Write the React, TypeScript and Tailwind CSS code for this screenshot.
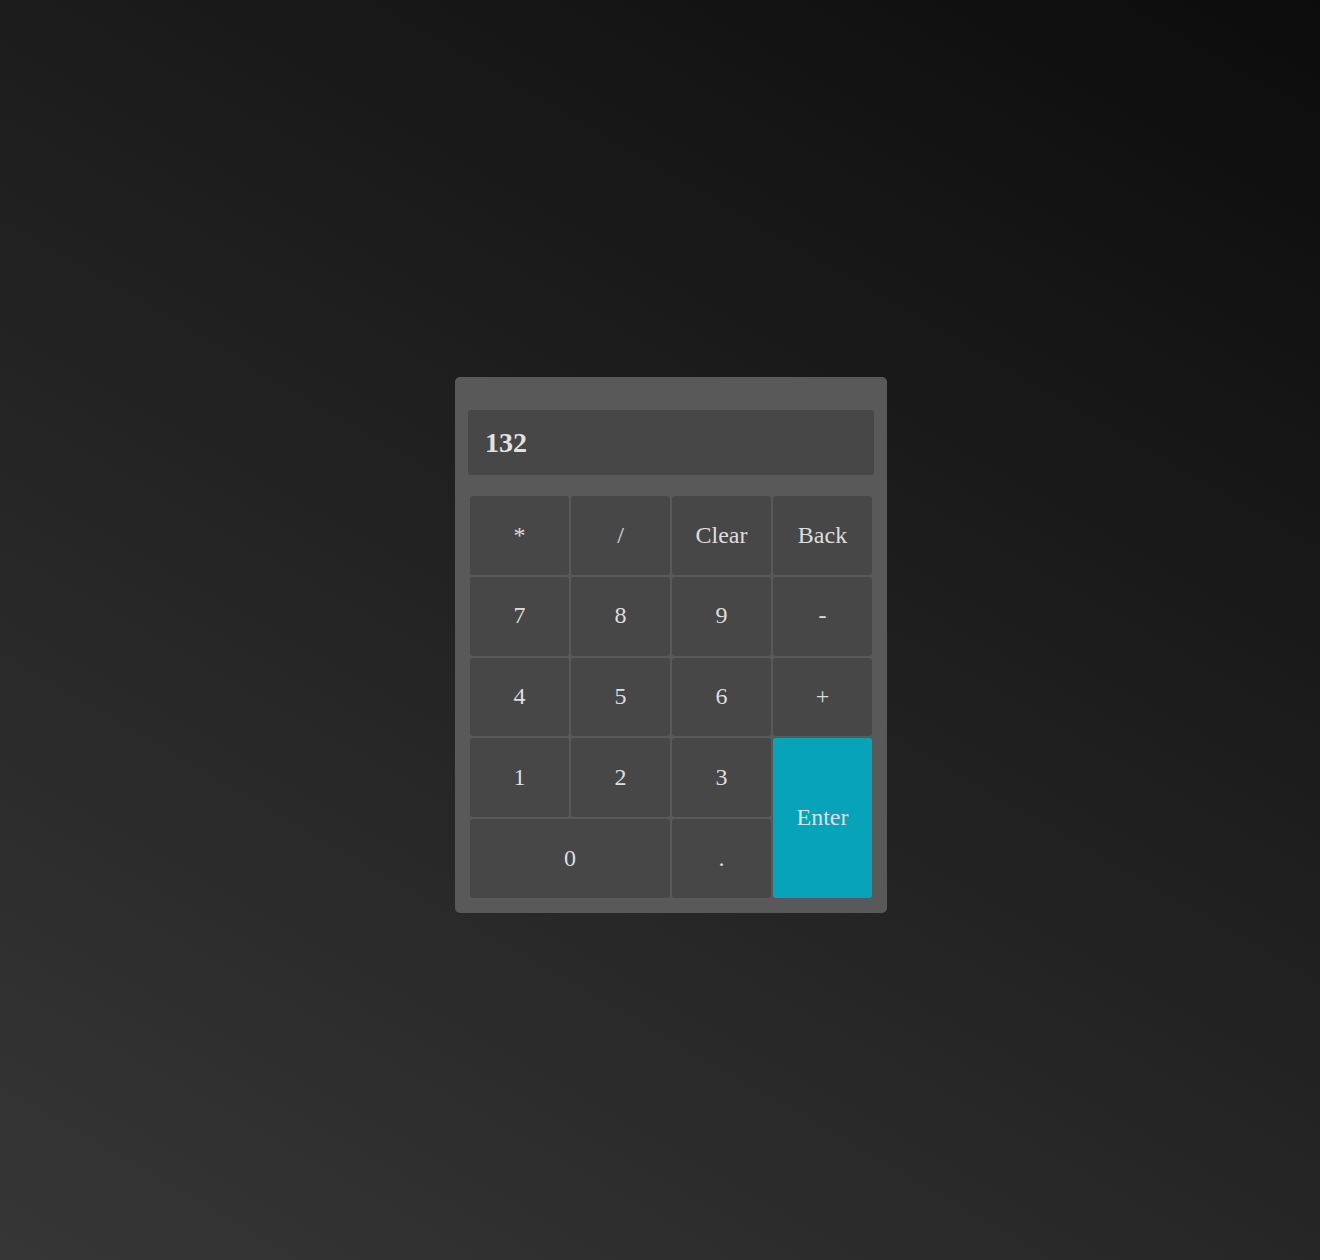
import React, { useState } from 'react';

const keys: { label: string; className?: string }[] = [
  { label: '*' },
  { label: '/' },
  { label: 'Clear' },
  { label: 'Back' },
  { label: '7' },
  { label: '8' },
  { label: '9' },
  { label: '-' },
  { label: '4' },
  { label: '5' },
  { label: '6' },
  { label: '+' },
  { label: '1' },
  { label: '2' },
  { label: '3' },
  { label: 'Enter', className: 'row-span-2 bg-[#07a3b9]' },
  { label: '0', className: 'col-span-2 bg-[#474747]' },
  { label: '.' },
];

export default function App() {
  const [value] = useState('132');

  return (
    <div className="min-h-screen flex items-center justify-center pl-[22px] pt-[30px] bg-[linear-gradient(30deg,#363636,#0c0c0c)] font-['Liberation_Serif',serif]">
      {/* Calculator body */}
      <div className="w-[432px] rounded-[5px] bg-[#595959] px-[13px] pt-[33px] pb-[15px]">
        <div className="h-[65px] rounded-[3px] bg-[#474747] flex items-center px-[17px] text-[28px] font-bold text-[#e2e2e2]">
          {value}
        </div>

        <div className="mt-[21px] mx-[2px] grid grid-cols-4 auto-rows-[78.75px] gap-[2px]">
          {keys.map((k) => (
            <button
              key={k.label}
              className={`flex items-center justify-center rounded-[3px] pb-[2px] text-[24px] text-[#dedede] ${
                k.className ?? 'bg-[#474747]'
              }`}
            >
              {k.label}
            </button>
          ))}
        </div>
      </div>
    </div>
  );
}
